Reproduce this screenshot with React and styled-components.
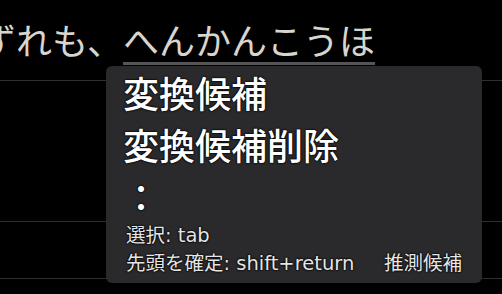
import React from 'react'
import styled, { createGlobalStyle } from 'styled-components';

const GlobalStyle = createGlobalStyle`
    html, body {
        margin: 0;
        padding: 0;
        background: #000;
    }
    body {
        font-family: "Noto Sans CJK JP", "Noto Sans", sans-serif;
    }
`

const candidates = ["変換候補", "変換候補削除", "："];

const App = () => {
    return (
        <Page>
            <GlobalStyle />
            <Composition>
                <span>ずれも、</span>
                <Marked>へんかんこうほ</Marked>
            </Composition>
            <Rule $top={16} />
            <Rule $top={140} />
            <Rule $top={56} />

            <Popup>
                {candidates.map((c) => (
                    <Candidate key={c}>{c}</Candidate>
                ))}
                <Hint>選択: tab</Hint>
                <Hint>
                    <span>先頭を確定: shift+return</span>
                    <span>推測候補</span>
                </Hint>
            </Popup>
        </Page>
    )
}

const Page = styled.div`
    position: relative;
    width: 502px;
    height: 294px;
    overflow: hidden;
    background: #000;
`

const Composition = styled.div`
    display: flex;
    margin-left: -20px;
    padding-top: 17px;
    height: 47px;
    font-size: 36px;
    line-height: 44px;
    color: #d8d4ce;
    white-space: nowrap;
`

const Marked = styled.span`
    height: 45px;
    border-bottom: 3px solid #555558;
`

const Rule = styled.div`
    margin-top: ${(p) => p.$top}px;
    height: 1px;
    background: #2f2f2f;
`

const Popup = styled.div`
    position: absolute;
    left: 106px;
    top: 66px;
    width: 376px;
    height: 217px;
    box-sizing: border-box;
    padding: 0 20px 0 17px;
    background: #2a2a2c;
    border-radius: 6px;
    color: #fff;
    text-shadow: 0 0 2px #000, 0 0 2px #000, 0 0 1px #000;
`

const Candidate = styled.div`
    font-size: 36px;
    line-height: 52px;
    height: 52px;
    font-weight: 500;
`

const Hint = styled.div`
    display: flex;
    justify-content: space-between;
    padding-left: 3px;
    font-family: "DejaVu Sans", "Noto Sans CJK JP", sans-serif;
    font-size: 19.5px;
    line-height: 28px;
    height: 28px;
    color: #e6e6e6;
`

export default App;
